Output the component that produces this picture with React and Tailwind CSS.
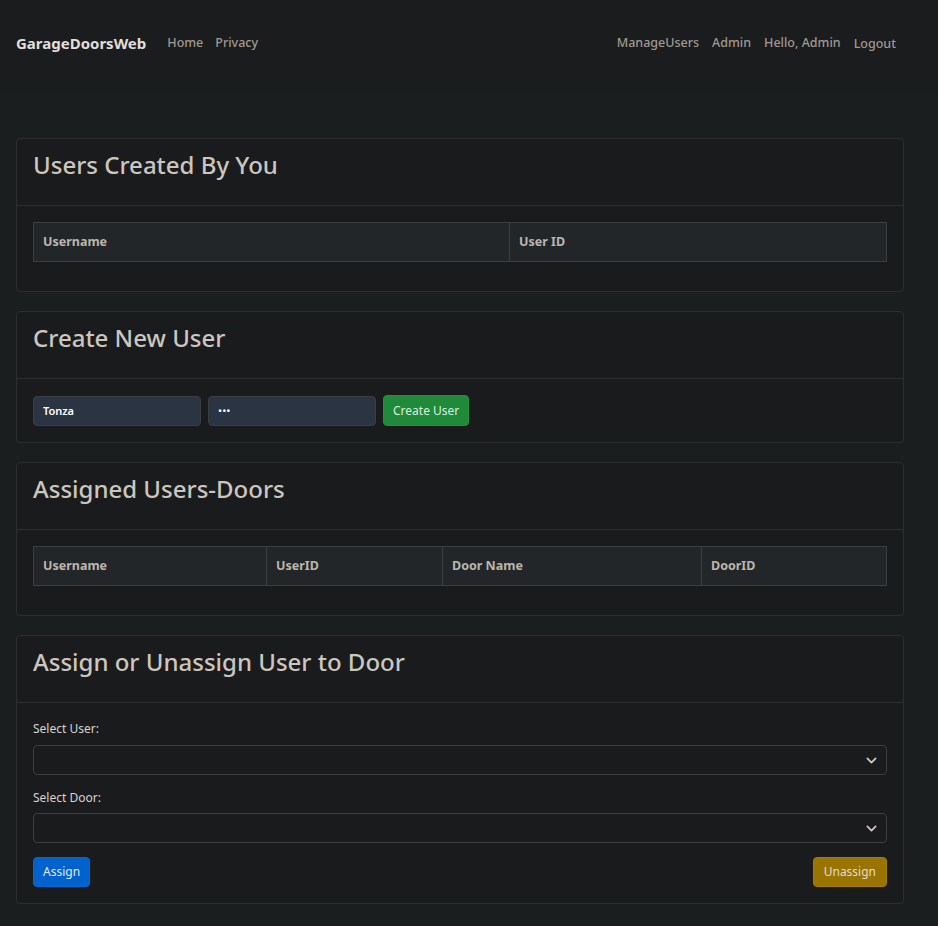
import React from 'react';

const font = { fontFamily: '"Noto Sans", "Open Sans", sans-serif' };

const Card = ({ title, children }) => (
  <div className="rounded border border-[#2c2f31] bg-[#1a1b1d]">
    <div className="h-[67px] border-b border-[#2c2f31] px-4 pt-[8px]">
      <h2 className="text-[24px] font-medium text-[#cbc6bf]">{title}</h2>
    </div>
    <div className="p-4">{children}</div>
  </div>
);

const TableHead = ({ cols }) => (
  <div className="mb-[13px] flex h-10 border border-[#3b3f42] bg-[#232628]">
    {cols.map((c, i) => (
      <div
        key={c.label}
        style={{ width: c.w }}
        className={`flex items-center px-[9px] text-[12.5px] font-bold text-[#bcb6ae] ${i > 0 ? 'border-l border-[#3b3f42]' : ''} ${c.grow ? 'flex-1' : ''}`}
      >
        {c.label}
      </div>
    ))}
  </div>
);

const Chevron = () => (
  <svg className="h-[11px] w-[11px] text-[#cbc6bf]" viewBox="0 0 16 16" fill="none">
    <path d="M2 5l6 6 6-6" stroke="currentColor" strokeWidth="2.6" strokeLinecap="round" strokeLinejoin="round" />
  </svg>
);

const Select = () => (
  <div className="flex h-[30px] items-center justify-end rounded border border-[#3b3f42] bg-[#1a1b1d] px-[9px]">
    <Chevron />
  </div>
);

export default function App() {
  return (
    <div style={font} className="min-h-screen bg-[#1b1e1f] pb-[22px]">
      {/* Navbar */}
      <nav className="flex h-[90px] items-center justify-between bg-[#1a1c1e] pb-[4px] pl-4 pr-[42px]">
        <div className="flex items-center">
          <span className="mr-[21px] text-[15px] font-bold text-[#e2dfdb]">GarageDoorsWeb</span>
          <a className="mr-[12px] text-[12.5px] font-medium text-[#a09990]">Home</a>
          <a className="text-[12.5px] font-medium text-[#a09990]">Privacy</a>
        </div>
        <div className="flex items-center gap-[13px] text-[12.5px] font-medium text-[#a09990]">
          <span>ManageUsers</span>
          <span>Admin</span>
          <span>Hello, Admin</span>
          <span className="pt-[2px]">Logout</span>
        </div>
      </nav>

      <main className="flex flex-col gap-[19px] pl-4 pr-[34px] pt-12">
        <Card title="Users Created By You">
          <TableHead cols={[{ label: 'Username', w: 475 }, { label: 'User ID', grow: true }]} />
        </Card>

        <Card title="Create New User">
          <div className="flex items-center">
            <input
              defaultValue="Tonza"
              className="mr-[7px] h-[30px] w-[168px] rounded border border-[#3b3f42] bg-[#2b3443] px-[9px] text-[11px] font-semibold text-white outline-none"
            />
            <input
              type="password"
              defaultValue="abc"
              className="mr-[7px] h-[30px] w-[168px] rounded border border-[#3b3f42] bg-[#2b3443] px-[9px] text-[11px] text-white outline-none"
            />
            <button className="h-[31px] rounded border border-[#24913f] bg-[#1f8a3a] px-[9px] text-[12px] text-[#dcefe0]">
              Create User
            </button>
          </div>
        </Card>

        <Card title="Assigned Users-Doors">
          <TableHead
            cols={[
              { label: 'Username', w: 232 },
              { label: 'UserID', w: 176 },
              { label: 'Door Name', w: 259 },
              { label: 'DoorID', grow: true },
            ]}
          />
        </Card>

        <Card title="Assign or Unassign User to Door">
          <div className="text-[12px] leading-[20px] text-[#d8d4cf]">Select User:</div>
          <div className="mt-[6px]">
            <Select />
          </div>
          <div className="mt-[13px] text-[12px] leading-[20px] text-[#d8d4cf]">Select Door:</div>
          <div className="mt-[5px]">
            <Select />
          </div>
          <div className="mt-[14px] flex justify-between">
            <button className="h-[30px] rounded border border-[#0a66d0] bg-[#0062cc] px-[9px] text-[12px] text-[#e4ecf7]">
              Assign
            </button>
            <button className="h-[30px] rounded border border-[#a57d00] bg-[#9a7400] px-[10px] text-[12px] text-[#e2dccf]">
              Unassign
            </button>
          </div>
        </Card>
      </main>
    </div>
  );
}
